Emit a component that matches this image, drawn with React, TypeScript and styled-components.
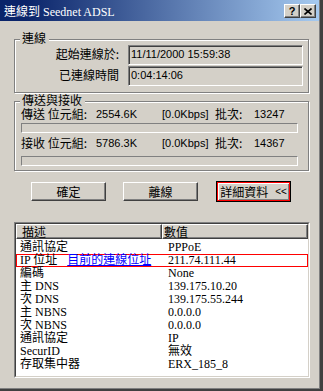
import React from 'react';
import styled, { createGlobalStyle } from 'styled-components';

const GlobalStyle = createGlobalStyle`
    html, body {
        margin: 0;
        padding: 0;
        background: #ffffff;
    }
    body {
        font-family: "Liberation Sans", "Noto Sans CJK TC", sans-serif;
        font-size: 12px;
        color: #000000;
    }
`;

const Window = styled.div`
    width: 323px;
    height: 391px;
    box-sizing: border-box;
    background: #d4d0c8;
    border-right: 3px solid #404040;
    border-bottom: 2px solid #404040;
    box-shadow: inset -1px -1px 0 #808080;
    display: flex;
    flex-direction: column;
    overflow: hidden;
`;

const TitleBar = styled.div`
    height: 21px;
    margin-right: 1px;
    box-sizing: border-box;
    padding: 4px 3px 0 4px;
    display: flex;
    align-items: flex-start;
    background: linear-gradient(to right, #0a246a 0%, #0a246a 8%, #a6caf0 100%);
`;

const TitleText = styled.div`
    flex: 1;
    padding-top: 1px;
    color: #ffffff;
    font-family: "Liberation Serif", "Noto Sans CJK TC", serif;
    font-size: 12px;
    line-height: 15px;
    white-space: nowrap;
`;

const CaptionButton = styled.div`
    width: 16px;
    height: 14px;
    box-sizing: border-box;
    background: #d4d0c8;
    border: 1px solid;
    border-color: #ffffff #404040 #404040 #ffffff;
    box-shadow: inset -1px -1px 0 #808080;
    display: flex;
    align-items: center;
    justify-content: center;
    font-family: "Liberation Sans", sans-serif;
    font-weight: bold;
    font-size: 11px;
    line-height: 11px;
`;

const Body = styled.div`
    display: flex;
    flex-direction: column;
    padding-left: 14px;
`;

const Group = styled.div<{ $top: number }>`
    position: relative;
    width: 295px;
    box-sizing: border-box;
    margin-top: ${p => p.$top}px;
    border: 1px solid #808080;
    box-shadow: inset 1px 1px 0 #ffffff, 1px 1px 0 #ffffff;
`;

const Legend = styled.span`
    position: absolute;
    top: -8px;
    left: 5px;
    padding: 0 3px 0 2px;
    background: #d4d0c8;
    font-family: "Noto Sans CJK TC", sans-serif;
    font-size: 12px;
    line-height: 12px;
`;

const ConnGrid = styled.div`
    display: grid;
    grid-template-columns: 1fr 175px;
    grid-auto-rows: 20px;
    column-gap: 9px;
    row-gap: 1px;
    padding: 5px 5px 6px 0;
`;

const ConnLabel = styled.div`
    justify-self: end;
    align-self: start;
    padding-top: 1px;
    font-family: "Noto Sans CJK TC", sans-serif;
    font-size: 12px;
    line-height: 15px;
`;

const ValueBox = styled.div`
    box-sizing: border-box;
    border: 1px solid;
    border-color: #808080 #ffffff #ffffff #808080;
    box-shadow: inset 1px 1px 0 #404040, inset -1px -1px 0 #d4d0c8;
    padding: 1px 0 0 2px;
    font-size: 11px;
    line-height: 15px;
`;

const TrafficBody = styled.div`
    padding: 5px 10px 4px 6px;
`;

const TrafficRow = styled.div<{ $top: number }>`
    display: grid;
    grid-template-columns: 75px 66px 53px 39px 1fr;
    height: 14px;
    margin-top: ${p => p.$top}px;
    line-height: 14px;
    white-space: nowrap;
`;

const CjkCell = styled.span`
    font-family: "Noto Sans CJK TC", sans-serif;
    font-size: 12px;
`;

const NumCell = styled.span`
    font-size: 11px;
`;

const Bar = styled.div<{ $top: number }>`
    height: 10px;
    box-sizing: border-box;
    margin-top: ${p => p.$top}px;
    border: 1px solid;
    border-color: #808080 #ffffff #ffffff #808080;
`;

const ButtonRow = styled.div`
    display: flex;
    align-items: center;
    height: 21px;
    margin-top: 10px;
    padding-left: 17px;
    gap: 17px;
`;

const DialogButton = styled.div<{ $default?: boolean }>`
    width: 75px;
    height: ${p => (p.$default ? 21 : 19)}px;
    margin-left: ${p => (p.$default ? 1 : 0)}px;
    box-sizing: border-box;
    background: #d4d0c8;
    border: 1px solid;
    border-color: ${p => (p.$default ? '#000000' : '#ffffff #404040 #404040 #ffffff')};
    box-shadow: ${p => (p.$default
        ? 'inset 0 0 0 1px #ff0000, inset 2px 2px 0 #ffffff, inset -2px -2px 0 #808080'
        : 'inset -1px -1px 0 #808080')};
    display: flex;
    align-items: center;
    justify-content: center;
    font-family: "Noto Sans CJK TC", sans-serif;
    font-size: 12px;
    line-height: 14px;
    white-space: nowrap;
`;

const Chevrons = styled.span`
    margin-left: 7px;
    font-family: "Liberation Sans", sans-serif;
    font-size: 10px;
`;

const ListFrame = styled.div`
    width: 296px;
    height: 156px;
    margin-top: 20px;
    box-sizing: border-box;
    border: 1px solid;
    border-color: #808080 #ffffff #ffffff #808080;
`;

const ListInner = styled.div`
    height: 100%;
    box-sizing: border-box;
    border: 1px solid;
    border-color: #404040 #d4d0c8 #d4d0c8 #404040;
    background: #ffffff;
    font-family: "Liberation Serif", "Noto Sans CJK TC", serif;
    font-size: 12px;
`;

const ListHeader = styled.div`
    display: grid;
    grid-template-columns: 146px 146px;
    height: 15px;
`;

const HeaderCell = styled.div<{ $pad: number }>`
    box-sizing: border-box;
    background: #d4d0c8;
    border: 1px solid;
    border-color: #ffffff #404040 #404040 #ffffff;
    box-shadow: inset -1px -1px 0 #808080;
    padding-left: ${p => p.$pad}px;
    font-family: "Noto Sans CJK TC", sans-serif;
    line-height: 13px;
`;

const ListRows = styled.div`
    padding-top: 2px;
`;

const ListRow = styled.div<{ $marked?: boolean }>`
    display: grid;
    grid-template-columns: 146px 1fr;
    height: 13px;
    line-height: 13px;
    white-space: nowrap;
    box-shadow: ${p => (p.$marked ? 'inset 0 0 0 1px #ff0000' : 'none')};
`;

const RowLabel = styled.span`
    padding-left: 4px;
`;

const RowValue = styled.span`
    padding-left: 6px;
`;

const AddrLink = styled.span`
    margin-left: 10px;
    color: #0000ff;
    text-decoration: underline;
`;

type DetailRow = { label: string, value: string, link?: string };

const details: DetailRow[] = [
    { label: '通訊協定', value: 'PPPoE' },
    { label: 'IP 位址', value: '211.74.111.44', link: '目前的連線位址' },
    { label: '編碼', value: 'None' },
    { label: '主 DNS', value: '139.175.10.20' },
    { label: '次 DNS', value: '139.175.55.244' },
    { label: '主 NBNS', value: '0.0.0.0' },
    { label: '次 NBNS', value: '0.0.0.0' },
    { label: '通訊協定', value: 'IP' },
    { label: 'SecurID', value: '無效' },
    { label: '存取集中器', value: 'ERX_185_8' },
];

type TrafficProps = { label: string, bytes: string, count: string, top: number };

function TrafficLine({ label, bytes, count, top }: TrafficProps) {
    return (
        <TrafficRow $top={top}>
            <CjkCell>{label}</CjkCell>
            <NumCell>{bytes}</NumCell>
            <NumCell>[0.0Kbps]</NumCell>
            <CjkCell>批次:</CjkCell>
            <NumCell>{count}</NumCell>
        </TrafficRow>
    );
}

function App() {
    return (
        <>
            <GlobalStyle />
            <Window>
                <TitleBar>
                    <TitleText>連線到 Seednet ADSL</TitleText>
                    <CaptionButton>?</CaptionButton>
                    <CaptionButton>
                        <svg width="8" height="7" viewBox="0 0 8 7">
                            <path d="M0.5 0.5 L7.5 6.5 M7.5 0.5 L0.5 6.5" stroke="#000" strokeWidth="1.6" />
                        </svg>
                    </CaptionButton>
                </TitleBar>
                <Body>
                    <Group $top={18}>
                        <Legend>連線</Legend>
                        <ConnGrid>
                            <ConnLabel>起始連線於:</ConnLabel>
                            <ValueBox>11/11/2000 15:59:38</ValueBox>
                            <ConnLabel>已連線時間</ConnLabel>
                            <ValueBox>0:04:14:06</ValueBox>
                        </ConnGrid>
                    </Group>
                    <Group $top={8}>
                        <Legend>傳送與接收</Legend>
                        <TrafficBody>
                            <TrafficLine label="傳送 位元組:" bytes="2554.6K" count="13247" top={0} />
                            <Bar $top={2} />
                            <TrafficLine label="接收 位元組:" bytes="5786.3K" count="14367" top={3} />
                            <Bar $top={6} />
                        </TrafficBody>
                    </Group>
                    <ButtonRow>
                        <DialogButton>確定</DialogButton>
                        <DialogButton>離線</DialogButton>
                        <DialogButton $default>
                            詳細資料<Chevrons>&lt;&lt;</Chevrons>
                        </DialogButton>
                    </ButtonRow>
                    <ListFrame>
                        <ListInner>
                            <ListHeader>
                                <HeaderCell $pad={5}>描述</HeaderCell>
                                <HeaderCell $pad={1}>數值</HeaderCell>
                            </ListHeader>
                            <ListRows>
                                {details.map((row, i) => (
                                    <ListRow key={i} $marked={!!row.link}>
                                        <RowLabel>
                                            {row.label}
                                            {row.link ? <AddrLink>{row.link}</AddrLink> : null}
                                        </RowLabel>
                                        <RowValue>{row.value}</RowValue>
                                    </ListRow>
                                ))}
                            </ListRows>
                        </ListInner>
                    </ListFrame>
                </Body>
            </Window>
        </>
    );
}

export default App;
